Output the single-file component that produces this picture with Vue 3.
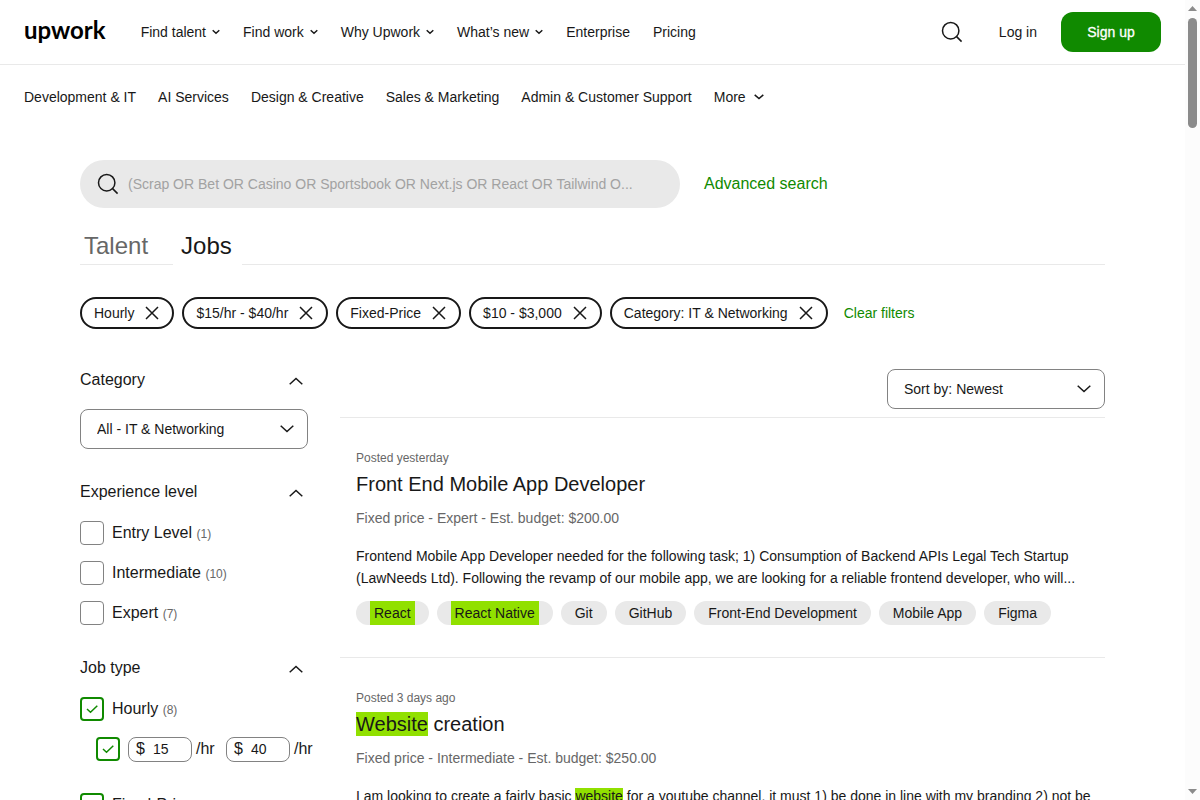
<script setup>
import { ref } from 'vue'

const mainNav = [
  { label: 'Find talent', menu: true },
  { label: 'Find work', menu: true },
  { label: 'Why Upwork', menu: true },
  { label: 'What’s new', menu: true },
  { label: 'Enterprise', menu: false },
  { label: 'Pricing', menu: false },
]

const categories = [
  'Development & IT',
  'AI Services',
  'Design & Creative',
  'Sales & Marketing',
  'Admin & Customer Support',
]

const filters = ['Hourly', '$15/hr - $40/hr', 'Fixed-Price', '$10 - $3,000', 'Category: IT & Networking']

const levels = ref([
  { id: 'entry', label: 'Entry Level', count: 1, checked: false },
  { id: 'intermediate', label: 'Intermediate', count: 10, checked: false },
  { id: 'expert', label: 'Expert', count: 7, checked: false },
])

const hourly = ref(true)
const hourlyRange = ref(true)
const fixed = ref(true)
const minRate = ref('15')
const maxRate = ref('40')

const jobs = [
  {
    posted: 'Posted yesterday',
    title: [{ text: 'Front End Mobile App Developer' }],
    meta: 'Fixed price - Expert - Est. budget: $200.00',
    body: [
      {
        text: 'Frontend Mobile App Developer needed for the following task; 1) Consumption of Backend APIs Legal Tech Startup (LawNeeds Ltd). Following the revamp of our mobile app, we are looking for a reliable frontend developer, who will...',
      },
    ],
    tags: [
      { text: 'React', hit: true },
      { text: 'React Native', hit: true },
      { text: 'Git' },
      { text: 'GitHub' },
      { text: 'Front-End Development' },
      { text: 'Mobile App' },
      { text: 'Figma' },
    ],
  },
  {
    posted: 'Posted 3 days ago',
    title: [{ text: 'Website', hit: true }, { text: ' creation' }],
    meta: 'Fixed price - Intermediate - Est. budget: $250.00',
    body: [
      { text: 'I am looking to create a fairly basic ' },
      { text: 'website', hit: true },
      { text: ' for a youtube channel, it must 1) be done in line with my branding 2) not be' },
    ],
    tags: [],
  },
]
</script>

<template>
  <div class="page">
    <header class="topbar">
      <a class="logo" href="#">upwork</a>
      <nav class="main-nav" aria-label="Main">
        <template v-for="item in mainNav" :key="item.label">
          <button v-if="item.menu" type="button" class="nav-item">
            {{ item.label }}
            <svg class="caret" viewBox="0 0 8 6" aria-hidden="true"><path d="M.7 1.2 4 4.2 7.3 1.2" /></svg>
          </button>
          <a v-else class="nav-item" href="#">{{ item.label }}</a>
        </template>
      </nav>
      <button type="button" class="icon-button" aria-label="Search">
        <svg class="lens" viewBox="0 0 24 24" aria-hidden="true"><circle cx="10.7" cy="10.7" r="8.2" /><path d="m16.6 16.6 5 5" /></svg>
      </button>
      <a class="login" href="#">Log in</a>
      <button type="button" class="signup">Sign up</button>
    </header>

    <nav class="sub-nav" aria-label="Categories">
      <a v-for="c in categories" :key="c" class="nav-item" href="#">{{ c }}</a>
      <button type="button" class="nav-item more">
        More
        <svg class="caret wide" viewBox="0 0 10 6" aria-hidden="true"><path d="M.7.9 5 4.6 9.3.9" /></svg>
      </button>
    </nav>

    <main class="content">
      <div class="search-row">
        <label class="search-box">
          <svg class="lens" viewBox="0 0 24 24" aria-hidden="true"><circle cx="10.7" cy="10.7" r="8.2" /><path d="m16.6 16.6 5 5" /></svg>
          <input
            type="text"
            aria-label="Search jobs"
            placeholder="(Scrap OR Bet OR Casino OR Sportsbook OR Next.js OR React OR Tailwind O..."
          />
        </label>
        <a class="advanced" href="#">Advanced search</a>
      </div>

      <div class="tabs" role="tablist">
        <button type="button" role="tab" class="tab" aria-selected="false">Talent</button>
        <button type="button" role="tab" class="tab active" aria-selected="true">Jobs</button>
        <span class="tab-rule"></span>
      </div>

      <div class="chips">
        <button v-for="f in filters" :key="f" type="button" class="chip">
          {{ f }}
          <svg class="cross" viewBox="0 0 14 14" aria-hidden="true"><path d="m1 1 12 12M13 1 1 13" /></svg>
        </button>
        <a class="clear" href="#">Clear filters</a>
      </div>

      <div class="columns">
        <aside class="sidebar">
          <section class="group">
            <button type="button" class="group-head">
              <span>Category</span>
              <svg class="fold" viewBox="0 0 14 8" aria-hidden="true"><path d="M.7 7.2 7 1.4l6.3 5.8" /></svg>
            </button>
            <div class="select">
              <select aria-label="Category">
                <option>All - IT &amp; Networking</option>
              </select>
              <svg class="fold" viewBox="0 0 14 8" aria-hidden="true"><path d="M.7.8 7 6.6 13.3.8" /></svg>
            </div>
          </section>

          <section class="group">
            <button type="button" class="group-head">
              <span>Experience level</span>
              <svg class="fold" viewBox="0 0 14 8" aria-hidden="true"><path d="M.7 7.2 7 1.4l6.3 5.8" /></svg>
            </button>
            <div class="options">
              <label v-for="l in levels" :key="l.id" class="option">
                <span class="box">
                  <input v-model="l.checked" type="checkbox" />
                  <svg viewBox="0 0 24 24" aria-hidden="true"><path d="m7 12 3.5 3.2 6.800-6.500" /></svg>
                </span>
                <span>{{ l.label }} <small>({{ l.count }})</small></span>
              </label>
            </div>
          </section>

          <section class="group">
            <button type="button" class="group-head">
              <span>Job type</span>
              <svg class="fold" viewBox="0 0 14 8" aria-hidden="true"><path d="M.7 7.2 7 1.4l6.3 5.8" /></svg>
            </button>
            <div class="options">
              <label class="option">
                <span class="box">
                  <input v-model="hourly" type="checkbox" />
                  <svg viewBox="0 0 24 24" aria-hidden="true"><path d="m7 12 3.5 3.2 6.800-6.500" /></svg>
                </span>
                <span>Hourly <small>(8)</small></span>
              </label>
              <div class="range">
                <span class="box">
                  <input v-model="hourlyRange" type="checkbox" aria-label="Hourly rate range" />
                  <svg viewBox="0 0 24 24" aria-hidden="true"><path d="m7 12 3.5 3.2 6.800-6.500" /></svg>
                </span>
                <label class="rate"><span>$</span><input v-model="minRate" type="text" aria-label="Minimum rate" /></label>
                <span class="per">/hr</span>
                <label class="rate"><span>$</span><input v-model="maxRate" type="text" aria-label="Maximum rate" /></label>
                <span class="per">/hr</span>
              </div>
              <label class="option later">
                <span class="box">
                  <input v-model="fixed" type="checkbox" />
                  <svg viewBox="0 0 24 24" aria-hidden="true"><path d="m7 12 3.5 3.2 6.800-6.500" /></svg>
                </span>
                <span>Fixed-Price</span>
              </label>
            </div>
          </section>
        </aside>

        <section class="results">
          <div class="sort-row">
            <div class="select sort">
              <select aria-label="Sort by">
                <option>Sort by: Newest</option>
              </select>
              <svg class="fold" viewBox="0 0 14 8" aria-hidden="true"><path d="M.7.8 7 6.6 13.3.8" /></svg>
            </div>
          </div>
          <article v-for="job in jobs" :key="job.posted" class="job">
            <p class="posted">{{ job.posted }}</p>
            <h2><a href="#"><component :is="p.hit ? 'mark' : 'span'" v-for="p in job.title" :key="p.text">{{ p.text }}</component></a></h2>
            <p class="meta">{{ job.meta }}</p>
            <p class="body"><component :is="p.hit ? 'mark' : 'span'" v-for="p in job.body" :key="p.text">{{ p.text }}</component></p>
            <div v-if="job.tags.length" class="tags">
              <a v-for="t in job.tags" :key="t.text" class="tag" href="#">
                <mark v-if="t.hit">{{ t.text }}</mark>
                <template v-else>{{ t.text }}</template>
              </a>
            </div>
          </article>
        </section>
      </div>
    </main>

    <div class="scrollbar" aria-hidden="true">
      <svg viewBox="0 0 9 5"><path d="M0 5 4.5 0 9 5Z" /></svg>
      <span class="thumb"></span>
      <svg viewBox="0 0 9 5"><path d="M0 0h9L4.5 5Z" /></svg>
    </div>
  </div>
</template>

<style>
body {
  margin: 0;
  background: #fff;
}
</style>

<style scoped>
.page,
.page * {
  box-sizing: border-box;
}
.page {
  height: 100vh;
  overflow-y: auto;
  scrollbar-width: none;
  padding-right: 15px;
  font: 14px/22px "Liberation Sans", Arial, sans-serif;
  color: #181818;
}
button,
input,
select {
  margin: 0;
  padding: 0;
  border: 0;
  background: none;
  font: inherit;
  color: inherit;
}
button {
  cursor: pointer;
}
a {
  color: inherit;
  text-decoration: none;
}
p,
h2 {
  margin: 0;
}
svg {
  display: block;
  flex: none;
  fill: none;
  stroke: #181818;
  stroke-width: 1.5;
}
mark {
  background: #91e000;
  color: inherit;
}

.topbar {
  display: flex;
  align-items: center;
  height: 65px;
  padding: 0 24px;
  border-bottom: 1px solid #e9e9e9;
}
.logo {
  margin-right: 35px;
  padding-bottom: 4px;
  font: 700 24px/32px Lato, sans-serif;
  color: #000;
}
.main-nav {
  display: flex;
  flex: 1;
  gap: 23px;
}
.nav-item {
  display: flex;
  align-items: center;
  gap: 6px;
  white-space: nowrap;
}
.caret {
  width: 8px;
  height: 6px;
}
.caret.wide {
  width: 10px;
}
.lens {
  width: 24px;
  height: 24px;
}
.login {
  margin: 0 24px 0 35px;
}
.signup {
  width: 100px;
  height: 40px;
  border-radius: 12px;
  background: #108a00;
  color: #fff;
  -webkit-text-stroke: 0.3px #fff;
}
.sub-nav {
  display: flex;
  align-items: center;
  gap: 22px;
  height: 64px;
  padding: 0 24px;
}
.more {
  gap: 8px;
}

.content {
  padding: 31px 80px 0;
}
.search-row {
  display: flex;
  align-items: center;
  gap: 24px;
}
.search-box {
  display: flex;
  align-items: center;
  gap: 8px;
  width: 600px;
  height: 48px;
  padding: 0 16px;
  border-radius: 24px;
  background: #e9e9e9;
}
.search-box input {
  flex: 1;
  min-width: 0;
  outline: 0;
}
.search-box input::placeholder {
  color: #a2a2a2;
  opacity: 1;
}
.advanced,
.clear {
  color: #108a00;
}
.advanced {
  font-size: 16px;
}

.tabs {
  display: flex;
  margin-top: 22px;
}
.tab {
  padding: 0 25px 2px 4px;
  border-bottom: 1px solid #e9e9e9;
  font-size: 24px;
  line-height: 32px;
  color: #676767;
}
.tab.active {
  padding: 0 10px 2px 8px;
  border-color: transparent;
  color: #181818;
}
.tab-rule {
  flex: 1;
  border-bottom: 1px solid #e9e9e9;
}

.chips {
  display: flex;
  align-items: center;
  gap: 8px;
  margin-top: 32px;
}
.chip {
  display: flex;
  align-items: center;
  gap: 11px;
  height: 32px;
  padding: 0 13px 0 12px;
  border: 2px solid #181818;
  border-radius: 16px;
  white-space: nowrap;
}
.cross {
  width: 14px;
  height: 14px;
}
.clear {
  margin-left: 8px;
}

.columns {
  display: flex;
  gap: 32px;
  margin-top: 40px;
}
.sidebar {
  flex: none;
  width: 228px;
  font-size: 16px;
}
.group {
  margin-bottom: 32px;
}
.group-head {
  display: flex;
  align-items: center;
  justify-content: space-between;
  width: 100%;
  height: 24px;
  padding-right: 5px;
}
.group-head span {
  padding-bottom: 2px;
}
.fold {
  width: 14px;
  height: 8px;
}
.select {
  display: grid;
  align-items: center;
  height: 40px;
  font-size: 14px;
}
.select > * {
  grid-area: 1 / 1;
}
.select select {
  width: 100%;
  height: 40px;
  padding: 0 40px 0 16px;
  border: 1px solid #828282;
  border-radius: 8px;
  appearance: none;
}
.select .fold {
  justify-self: end;
  margin-right: 14px;
  pointer-events: none;
}
.group .select {
  margin-top: 16px;
}
.options {
  display: flex;
  flex-direction: column;
  gap: 16px;
  margin-top: 16px;
}
.option {
  display: flex;
  align-items: center;
  gap: 8px;
  height: 24px;
}
small {
  font-size: 12px;
  color: #676767;
}
.box {
  display: grid;
  flex: none;
  width: 24px;
  height: 24px;
}
.box > * {
  grid-area: 1 / 1;
}
.box input {
  width: 24px;
  height: 24px;
  border: 1px solid #828282;
  border-radius: 4px;
  appearance: none;
}
.box svg {
  width: 24px;
  height: 24px;
  stroke: #108a00;
  visibility: hidden;
  pointer-events: none;
}
.box input:checked {
  border: 2px solid #108a00;
}
.box input:checked + svg {
  visibility: visible;
}
.range {
  display: flex;
  align-items: center;
  gap: 8px;
  height: 24px;
  margin-left: 16px;
}
.rate {
  display: flex;
  align-items: center;
  flex: none;
  gap: 8px;
  width: 64px;
  height: 25px;
  padding: 0 7px;
  border: 1px solid #828282;
  border-radius: 8px;
}
.rate input {
  width: 32px;
  height: 20px;
  font-size: 14px;
}
.per {
  min-width: 22px;
  margin-left: -4px;
}
.option.later {
  margin-top: 16px;
}

.results {
  flex: 1;
  min-width: 0;
}
.sort-row {
  display: flex;
  justify-content: flex-end;
  padding-bottom: 8px;
  border-bottom: 1px solid #e9e9e9;
}
.sort {
  width: 218px;
}
.job {
  padding: 30px 12px 32px 16px;
  border-bottom: 1px solid #e9e9e9;
}
.posted {
  font-size: 12px;
  line-height: 20px;
  color: #676767;
}
.job h2 {
  margin-top: 4px;
  font-size: 20px;
  line-height: 24px;
  font-weight: 400;
}
.job h2 mark {
  display: inline-block;
}
.meta {
  margin-top: 11px;
  color: #676767;
}
.body {
  margin-top: 16px;
}
.tags {
  display: flex;
  flex-wrap: wrap;
  gap: 8px;
  margin-top: 12px;
}
.tag {
  padding: 0 14px;
  border-radius: 12px;
  background: #e9e9e9;
  line-height: 24px;
}
.tag mark {
  display: inline-block;
  padding: 0 4px;
}

.scrollbar {
  position: fixed;
  top: 0;
  right: 0;
  bottom: 0;
  display: flex;
  flex-direction: column;
  align-items: center;
  width: 15px;
  padding: 6px 0;
  background: #fcfcfc;
}
.scrollbar svg {
  width: 9px;
  height: 5px;
  fill: #8b8b8b;
  stroke: none;
}
.thumb {
  width: 9px;
  height: 110px;
  margin: 7px 0 auto;
  border-radius: 5px;
  background: #8b8b8b;
}
</style>
